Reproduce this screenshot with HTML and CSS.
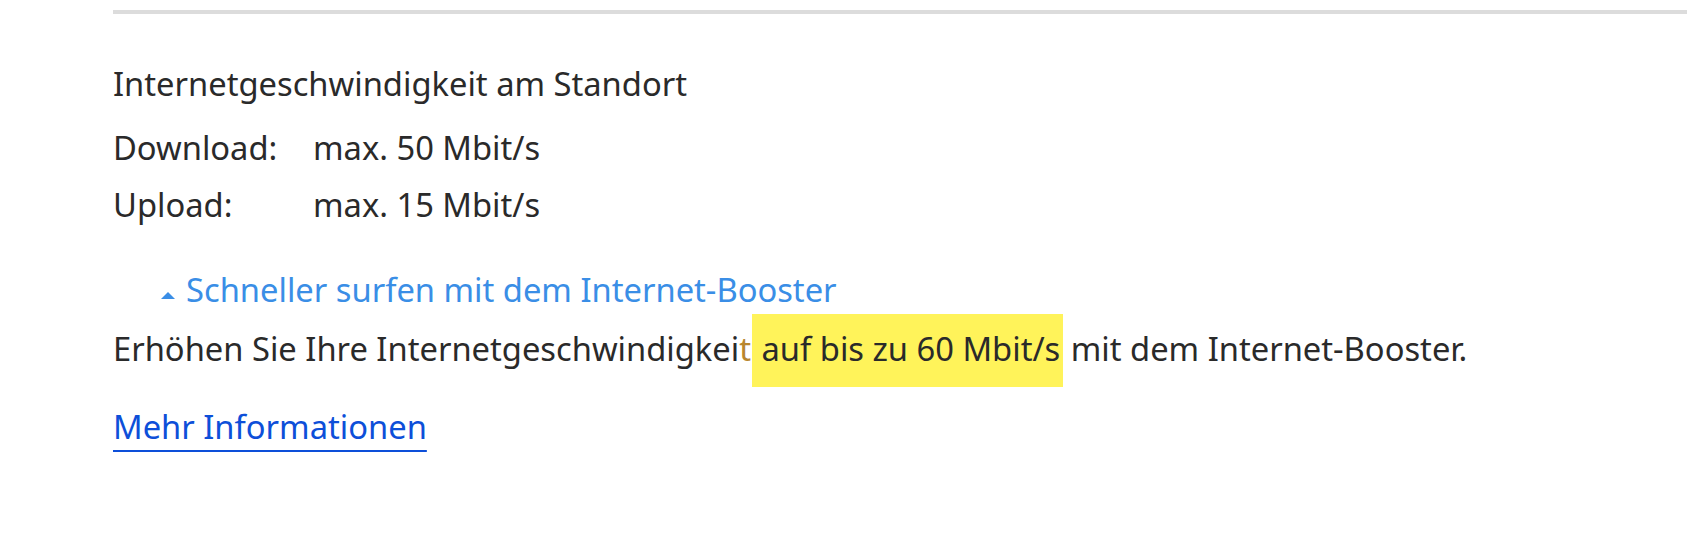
FILE: index.html
```html
<!DOCTYPE html>
<html lang="de">
<head>
<meta charset="utf-8">
<title>Internetgeschwindigkeit</title>
<link rel="stylesheet" href="styles.css">
</head>
<body>
<main class="page">
  <hr class="divider">
  <section class="speed">
    <h2 class="speed-title">Internetgeschwindigkeit am Standort</h2>
    <dl class="speed-list">
      <dt>Download:</dt><dd>max. 50 Mbit/s</dd>
      <dt>Upload:</dt><dd>max. 15 Mbit/s</dd>
    </dl>
  </section>
  <section class="booster">
    <a class="booster-toggle" href="#booster">
      <svg class="caret" width="14" height="7" viewBox="0 0 14 7" aria-hidden="true"><path d="M0 7 L7 0 L14 7 Z" fill="currentColor"/></svg>Schneller surfen mit dem Internet-Booster
    </a>
    <p class="booster-text">Erhöhen Sie Ihre Internetgeschwindigkei<span class="tint">t</span> <mark class="hl">auf bis zu 60 Mbit/s</mark> mit dem Internet-Booster.</p>
    <p class="more-wrap"><a class="more" href="#mehr">Mehr Informationen</a></p>
  </section>
</main>
</body>
</html>
```
FILE: styles.css
```css
html, body {
  margin: 0;
  padding: 0;
  background: #ffffff;
}

body {
  font-family: "Noto Sans", "Open Sans", sans-serif;
  font-size: 32.7px;
  line-height: 57px;
  color: #2a2a2a;
}

.page {
  padding: 10px 0 0 113px;
}

.divider {
  margin: 0;
  border: 0;
  height: 4px;
  background: #dcdcdc;
}

.speed-title {
  margin: 41px 0 0;
  font-size: inherit;
  font-weight: 400;
  line-height: inherit;
}

.speed-list {
  margin: 7px 0 0;
  display: grid;
  grid-template-columns: 200px auto;
}

.speed-list dt,
.speed-list dd {
  margin: 0;
}

.booster {
  margin-top: 28px;
}

.booster-toggle {
  display: block;
  padding-left: 48px;
  color: #3a8ee6;
  text-decoration: none;
}

.caret {
  display: inline-block;
  vertical-align: 3px;
  margin-right: 11px;
}

.booster-text {
  margin: 2px 0 0;
}

.tint {
  color: #b8862e;
}

.hl {
  background: #fff35a;
  color: inherit;
  padding: 12px 3px 16px 10px;
  margin: 0 -1px 0 -8px;
}

.more-wrap {
  margin: 21px 0 0;
}

.more {
  color: #0d4fd9;
  text-decoration: underline;
  text-decoration-thickness: 2px;
  text-underline-offset: 11px;
}
```
